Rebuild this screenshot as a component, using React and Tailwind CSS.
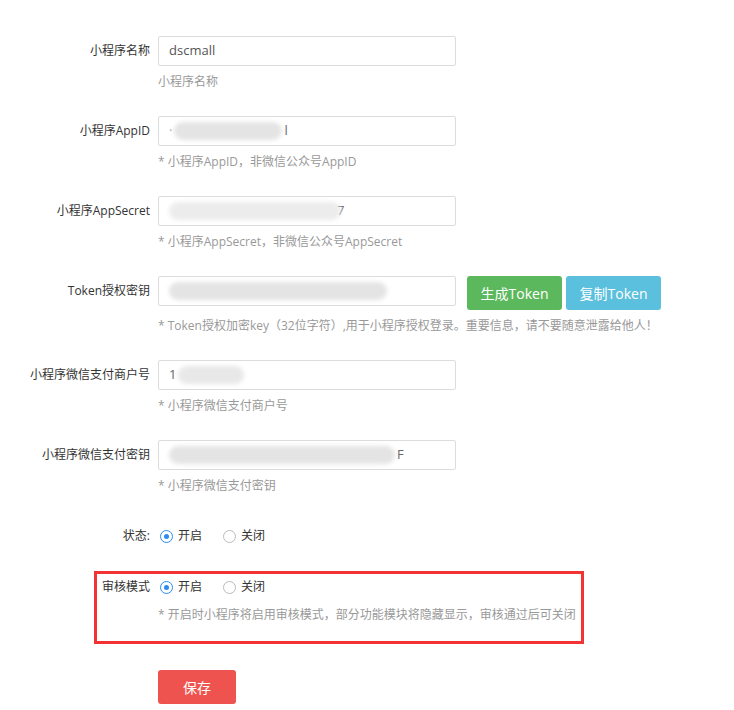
import React, { useState } from "react";

const font = { fontFamily: '"Open Sans", "Noto Sans CJK SC", sans-serif' };

// blurred redaction pill inside an input
const Smudge = ({ w, tone = "bg-[#e4e4e4]" }) => (
  <span className={`inline-block h-[18px] rounded-full blur-[2px] ${tone}`} style={{ width: w }} />
);

const Field = ({ label, children, help, extra, labelW = "w-[150px]" }) => (
  <div className="flex flex-col">
    <div className="flex items-start">
      <div className={`${labelW} shrink-0 h-[30px] flex items-center justify-end text-[12px] text-[#333]`}>{label}</div>
      <div className="ml-2 flex items-start">
        <div className="w-[298px] h-[30px] border border-[#dcdcdc] rounded-[2px] flex items-center px-[10px] text-[13px] text-[#555] overflow-hidden">
          {children}
        </div>
        {extra}
      </div>
    </div>
    {help && <div className="ml-[158px] mt-[7px] text-[12px] leading-[18px] text-[#999]">{help}</div>}
  </div>
);

const Radio = ({ checked, label, onClick }) => (
  <label onClick={onClick} className="flex items-center cursor-pointer mr-[21px]">
    <span className={`w-[13px] h-[13px] rounded-full border flex items-center justify-center ${checked ? "border-[#2d8cf0]" : "border-[#bbb]"}`}>
      {checked && <span className="w-[5px] h-[5px] rounded-full bg-[#2d8cf0]" />}
    </span>
    <span className="ml-[5px] text-[12px] text-[#333]">{label}</span>
  </label>
);

export default function App() {
  const [status, setStatus] = useState(true);
  const [review, setReview] = useState(true);

  return (
    <div className="w-[734px] h-[710px] bg-white overflow-hidden" style={font}>
      <div className="pt-[36px] flex flex-col">
        <Field label="小程序名称" help="小程序名称">dscmall</Field>

        <div className="mt-[25px]">
          <Field label="小程序AppID" help="* 小程序AppID，非微信公众号AppID">
            <span className="text-[#aaa] mr-[2px]">·</span>
            <Smudge w="108px" />
            <span className="ml-[2px] text-[#666]">l</span>
          </Field>
        </div>

        <div className="mt-[25px]">
          <Field label="小程序AppSecret" help="* 小程序AppSecret，非微信公众号AppSecret">
            <Smudge w="172px" tone="bg-[#ececec]" />
            <span className="-ml-[4px] text-[#666]">7</span>
          </Field>
        </div>

        <div className="mt-[25px]">
          <Field
            label="Token授权密钥"
            help="* Token授权加密key（32位字符）,用于小程序授权登录。重要信息，请不要随意泄露给他人！"
            extra={
              <div className="flex ml-[11px] gap-[4px]">
                <button className="w-[95px] h-[34px] rounded-[3px] bg-[#5cb85c] text-white text-[14px]">生成Token</button>
                <button className="w-[95px] h-[34px] rounded-[3px] bg-[#5bc0de] text-white text-[14px]">复制Token</button>
              </div>
            }
          >
            <Smudge w="218px" />
          </Field>
        </div>

        <div className="mt-[25px]">
          <Field label="小程序微信支付商户号" help="* 小程序微信支付商户号">
            <span className="text-[#666] mr-[2px]">1</span>
            <Smudge w="66px" tone="bg-[#e8e8e8]" />
          </Field>
        </div>

        <div className="mt-[25px]">
          <Field label="小程序微信支付密钥" help="* 小程序微信支付密钥">
            <Smudge w="226px" />
            <span className="ml-[2px] text-[#666]">F</span>
          </Field>
        </div>

        <div className="mt-[31px] flex items-center h-[20px]">
          <div className="w-[150px] text-right text-[12px] text-[#333]">状态:</div>
          <div className="ml-[10px] flex">
            <Radio checked={status} label="开启" onClick={() => setStatus(true)} />
            <Radio checked={!status} label="关闭" onClick={() => setStatus(false)} />
          </div>
        </div>

        <div className="mt-[25px] ml-[94px] w-[490px] h-[73px] border-[3px] border-[#f33333] pt-[3px]">
          <div className="flex items-center h-[20px]">
            <div className="w-[53px] text-right text-[12px] text-[#333]">审核模式</div>
            <div className="ml-[10px] flex">
              <Radio checked={review} label="开启" onClick={() => setReview(true)} />
              <Radio checked={!review} label="关闭" onClick={() => setReview(false)} />
            </div>
          </div>
          <div className="ml-[61px] mt-[9px] text-[12px] leading-[18px] text-[#999]">
            * 开启时小程序将启用审核模式，部分功能模块将隐藏显示，审核通过后可关闭
          </div>
        </div>

        <div className="mt-[26px] ml-[158px]">
          <button className="w-[78px] h-[34px] rounded-[3px] bg-[#ef5350] text-white text-[14px]">保存</button>
        </div>
      </div>
    </div>
  );
}
